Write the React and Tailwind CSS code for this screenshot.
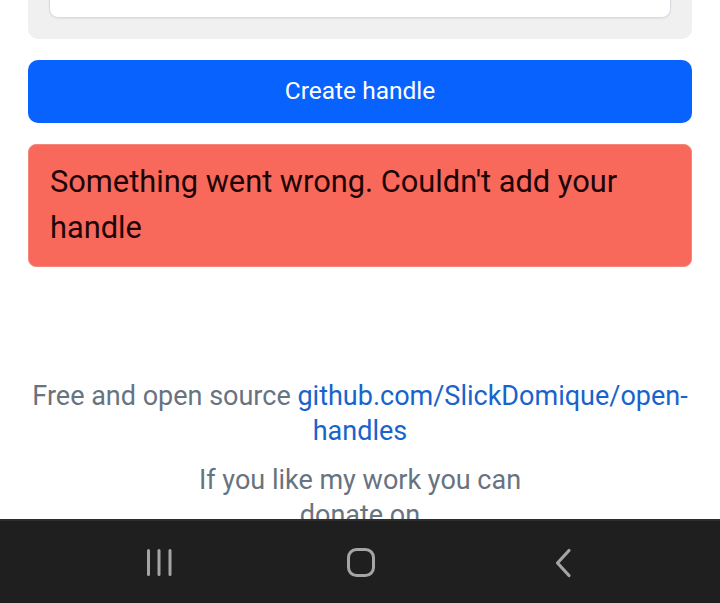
export default function App() {
  return (
    <div
      className="relative h-[603px] w-[720px] overflow-hidden bg-white"
      style={{ fontFamily: 'Roboto, "Noto Sans", sans-serif' }}
    >
      <div className="px-[28px]">
        <div className="rounded-b-[10px] bg-[#f0f0f0] px-[21px] pb-[21px]">
          <div className="h-[18px] rounded-b-[9px] border border-t-0 border-[#d6dbe1] bg-white shadow-[0_1px_2px_rgba(0,0,0,0.06)]" />
        </div>
        <button className="mt-[21px] flex h-[63px] w-full items-center justify-center rounded-[10px] bg-[#0862fe] text-[24.5px] text-white">
          Create handle
        </button>
        <div className="mt-[21px] rounded-[8px] border border-[#f3877c] bg-[#f8695c] px-[21px] pb-[15px] pt-[14px] text-[30.8px] leading-[46px] text-[#1c0504]">
          Something went wrong. Couldn't add your handle
        </div>
        <div className="mt-[112px] text-center text-[27px] leading-[35px] text-[#687380]">
          Free and open source{' '}
          <a className="text-[#1863cc]">github.com/SlickDomique/open-handles</a>
        </div>
        <div className="mx-auto mt-[14px] w-[380px] text-center text-[27px] leading-[35px] text-[#687380]">
          If you like my work you can donate on
        </div>
      </div>

      <div className="absolute bottom-0 left-0 right-0 h-[84px] border-t-[2px] border-[#2c2c2c] bg-[#1f1f1f]">
        <svg width="720" height="82" viewBox="0 0 720 82" className="block">
          <g fill="#a5a5a5">
            <rect x="147" y="28" width="3" height="27" rx="1.5" />
            <rect x="157.5" y="28" width="3" height="27" rx="1.5" />
            <rect x="168.5" y="28" width="3" height="27" rx="1.5" />
          </g>
          <rect x="348.5" y="28.5" width="25" height="26" rx="8" fill="none" stroke="#a5a5a5" strokeWidth="3" />
          <path d="M569 29.5 L557.5 42 L569 54.5" fill="none" stroke="#a5a5a5" strokeWidth="3.2" strokeLinecap="round" strokeLinejoin="round" />
        </svg>
      </div>
    </div>
  );
}
